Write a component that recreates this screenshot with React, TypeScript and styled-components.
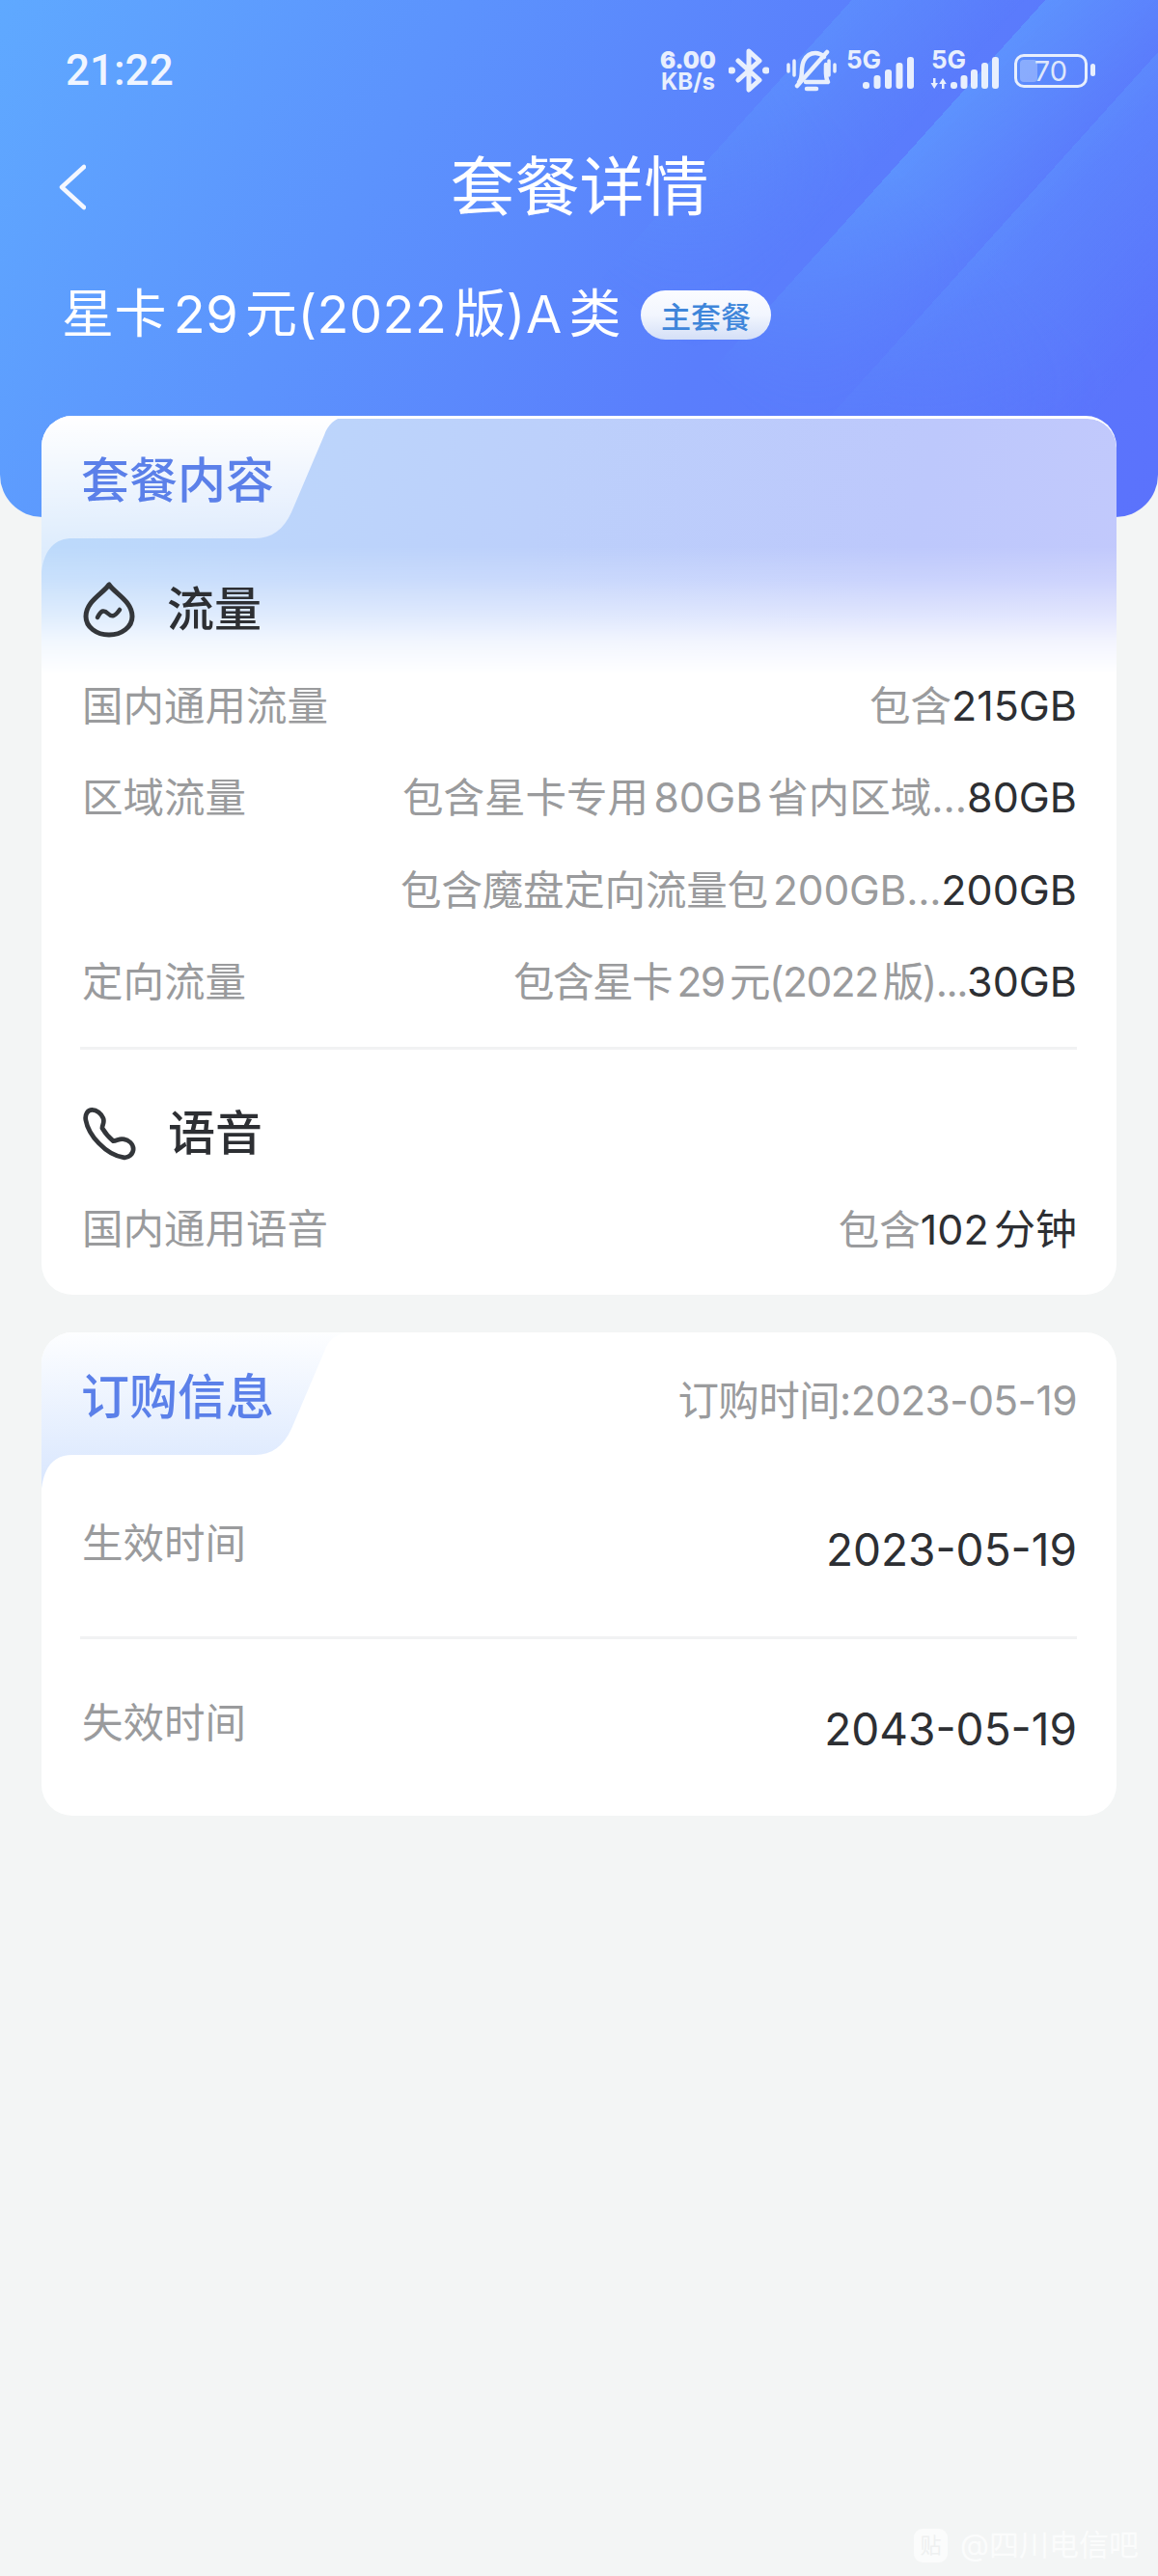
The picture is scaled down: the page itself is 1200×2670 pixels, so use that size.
import { createGlobalStyle, styled } from "styled-components";

const GlobalStyle = createGlobalStyle`
  html, body {
    margin: 0;
    padding: 0;
    background: #f3f5f5;
  }

  body {
    font-family: Inter, "Noto Sans CJK SC", sans-serif;
  }

  * {
    box-sizing: border-box;
  }
`;

const Page = styled.div`
  position: relative;
  width: 1200px;
  height: 2670px;
  overflow: hidden;
  background: #f3f5f5;
`;

const Header = styled.header`
  position: relative;
  height: 536px;
  padding-top: 50px;
  border-radius: 0 0 44px 44px;
  overflow: hidden;
  color: #fff;
  background: linear-gradient(118deg, #5fa9ff 0%, #5c93fd 32%, #5a7efc 62%, #5b72fc 100%);

  &::before {
    content: "";
    position: absolute;
    inset: 0;
    background:
      linear-gradient(132deg, transparent 928px, rgba(96, 160, 255, 0.34) 928px, transparent 1130px),
      linear-gradient(132deg, transparent 805px, rgba(96, 165, 255, 0.55) 805px, transparent 960px),
      linear-gradient(132deg, transparent 656px, rgba(96, 160, 255, 0.38) 656px, transparent 790px);
    mask-image: linear-gradient(42deg, transparent 50%, #000 74%);
  }
`;

const StatusBar = styled.div`
  position: relative;
  display: flex;
  align-items: center;
  justify-content: space-between;
  height: 46px;
  padding: 0 67px 0 68px;
`;

const Clock = styled.span`
  font-family: Roboto, sans-serif;
  font-size: 44px;
  font-weight: 500;
  line-height: 46px;
  color: #f0f5ff;
`;

const StatusIcons = styled.div`
  display: flex;
  align-items: center;
  height: 46px;
  color: #e8effd;
`;

const Speed = styled.div`
  display: flex;
  flex-direction: column;
  width: 60px;
  margin-right: 12px;
  font-weight: 700;
  text-align: center;

  b {
    font-size: 24px;
    line-height: 23px;
  }

  span {
    font-size: 24px;
    line-height: 22px;
  }
`;

const Glyph = styled.svg<{ $gap: number }>`
  display: block;
  flex: none;
  margin-right: ${(p) => p.$gap}px;
`;

const Signal = styled.div<{ $gap: number }>`
  position: relative;
  width: 71px;
  height: 46px;
  margin-right: ${(p) => p.$gap}px;

  svg {
    position: absolute;
    right: 0;
    bottom: 4px;
  }

  span {
    position: absolute;
    left: 1px;
    top: 0;
    font-size: 26px;
    font-weight: 700;
    line-height: 24px;
  }
`;

const Battery = styled.div`
  position: relative;
  display: flex;
  align-items: center;
  justify-content: center;
  width: 76px;
  height: 35px;
  margin-right: 6px;
  border: 3.5px solid #e8effd;
  border-radius: 10px;
  font-size: 29px;
  font-weight: 400;
  color: #dfe7fb;

  &::after {
    content: "";
    position: absolute;
    right: -11px;
    top: 7px;
    width: 5px;
    height: 13px;
    border-radius: 3px;
    background: #e8effd;
  }
`;

const BatteryFill = styled.div`
  position: absolute;
  left: 3px;
  top: 3px;
  bottom: 3px;
  width: 18px;
  border-radius: 4px;
  background: rgba(255, 255, 255, 0.28);
`;

const BatteryLevel = styled.span`
  position: relative;
`;

const NavBar = styled.div`
  position: relative;
  display: grid;
  grid-template-columns: 1fr auto 1fr;
  align-items: center;
  height: 80px;
  margin-top: 58px;
  padding-left: 61px;
`;

const NavTitle = styled.h1`
  margin: 0;
  font-size: 67px;
  font-weight: 400;
  line-height: 80px;
  transform: translateX(-30px);
`;

const PlanRow = styled.div`
  position: relative;
  display: flex;
  align-items: center;
  gap: 20px;
  height: 60px;
  margin-top: 62px;
  padding-left: 64px;
`;

const PlanName = styled.span`
  font-size: 54px;
  font-weight: 400;
  line-height: 60px;
  letter-spacing: 0.5px;
  text-autospace: normal;
`;

const PlanTag = styled.span`
  display: flex;
  align-items: center;
  justify-content: center;
  width: 135px;
  height: 51px;
  border-radius: 26px;
  font-size: 31px;
  font-weight: 500;
  color: #3f86da;
  background: linear-gradient(180deg, #fbfcff 0%, #f2f6fe 50%, #d4dff7 100%);
`;

const Main = styled.main`
  position: relative;
  display: flex;
  flex-direction: column;
  gap: 39px;
  margin-top: -105px;
  padding: 0 43px;
`;

const Card = styled.section`
  position: relative;
  border-radius: 32px;
  overflow: hidden;
  background: #fff;
`;

const CardGlow = styled.div`
  position: absolute;
  left: 0;
  right: 0;
  top: 3px;
  height: 265px;
  border-radius: 30px 30px 0 0;
  background: linear-gradient(100deg, #bcdafb 0%, #bcd0fb 45%, #bdc8fc 80%, #c2c9fc 100%);
  mask-image: linear-gradient(
    180deg,
    #000 0%,
    #000 50%,
    rgba(0, 0, 0, 0.8) 63%,
    rgba(0, 0, 0, 0.45) 78%,
    rgba(0, 0, 0, 0.2) 87%,
    transparent 100%
  );
`;

const TabShape = styled.svg`
  position: absolute;
  left: 0;
  top: 0;
  display: block;
`;

const CardHead = styled.div`
  position: relative;
  display: flex;
  justify-content: space-between;
  height: 132px;
  padding: 0 41px 0 41px;
`;

const CardTitle = styled.h2`
  margin: 0;
  font-size: 50px;
  font-weight: 500;
  line-height: 134px;
  color: #5b80e9;
`;

const OrderTime = styled.span`
  padding-top: 5px;
  font-size: 42.5px;
  line-height: 132px;
  letter-spacing: -0.6px;
  color: #9a9b9d;
`;

const SectionHead = styled.div<{ $top: number }>`
  position: relative;
  display: flex;
  align-items: center;
  gap: 33px;
  height: 70px;
  margin-top: ${(p) => p.$top}px;
  padding-left: 43px;
  font-size: 49px;
  font-weight: 500;
  color: #2d2f33;
`;

const SectionName = styled.span`
  padding-bottom: 9px;
`;

const RowList = styled.div<{ $top: number }>`
  position: relative;
  margin-top: ${(p) => p.$top}px;
  padding: 0 41px 0 42px;
`;

const Row = styled.div`
  display: flex;
  align-items: center;
  justify-content: space-between;
  height: 95.3px;
  font-size: 42.5px;
`;

const Muted = styled.span<{ $squeeze?: number }>`
  color: #9a9b9d;
  white-space: nowrap;
  letter-spacing: ${(p) => p.$squeeze ?? 0}px;
`;

const Detail = styled.span`
  white-space: nowrap;
  text-autospace: normal;
`;

const Amount = styled.span`
  display: inline-block;
  font-size: 43px;
  color: #2d2f33;
`;

const Divider = styled.div<{ $top: number }>`
  height: 3px;
  margin: ${(p) => p.$top}px 41px 0 40px;
  background: #f1f2f3;
`;

const CardFoot = styled.div`
  height: 24px;
`;

const DateRow = styled.div`
  display: flex;
  align-items: flex-start;
  justify-content: space-between;
  height: 183px;
  padding: 61px 41px 0 42px;
`;

const DateLabel = styled.span`
  font-size: 42.5px;
  line-height: 52px;
  color: #9a9b9d;
`;

const DateValue = styled.span`
  font-size: 46px;
  line-height: 64px;
  color: #2d2f33;
`;

const Watermark = styled.div`
  position: absolute;
  right: 20px;
  top: 2618px;
  display: flex;
  align-items: center;
  gap: 13px;
  font-size: 31px;
  line-height: 40px;
  color: #fbfcfc;
`;

const WatermarkBadge = styled.span`
  display: flex;
  align-items: center;
  justify-content: center;
  width: 35px;
  height: 35px;
  border-radius: 9px;
  font-size: 22px;
  color: #eef0f0;
  background: #fbfcfc;
`;

function CardTab({ id, from, to }: { id: string; from: string; to: string }) {
  return (
    <TabShape width="330" height="165" viewBox="0 0 330 165">
      <defs>
        <linearGradient id={id} x1="0" y1="0" x2="0" y2="1">
          <stop offset="0" stopColor={from} />
          <stop offset="1" stopColor={to} />
        </linearGradient>
      </defs>
      <path
        d="M0 0H316C303 3 297 9 293 20L259 100C251 118 238 127 222 127H32C15 127 3 137 0 162Z"
        fill={`url(#${id})`}
      />
    </TabShape>
  );
}

function SignalBars() {
  const bars = [
    { x: 0, h: 7 },
    { x: 11.5, h: 14 },
    { x: 23, h: 20 },
    { x: 34.5, h: 27 },
    { x: 46, h: 33 },
  ];

  return (
    <svg width="53" height="33" viewBox="0 0 53 33" fill="currentColor">
      {bars.map((bar) => (
        <rect key={bar.x} x={bar.x} y={33 - bar.h} width="7" height={bar.h} rx="3" />
      ))}
    </svg>
  );
}

function DropIcon() {
  return (
    <svg width="54" height="58" viewBox="0 0 54 58" fill="none" stroke="#33363a" strokeLinecap="round">
      <path
        d="M27 3C21 12 3 20 3 36C3 47 14 55 27 55C40 55 51 47 51 36C51 20 33 12 27 3Z"
        strokeWidth="5"
        strokeLinejoin="round"
      />
      <path d="M15 37C19 29 22 29 26 33C30 37 33 36 38 29" strokeWidth="4.5" />
    </svg>
  );
}

function PhoneIcon() {
  return (
    <svg width="55" height="58" viewBox="0 0 58 58" fill="none" stroke="#33363a" strokeWidth="5" strokeLinejoin="round">
      <path d="M10 3C5 3 2 8 3 14C6 31 25 52 44 55C50 56 55 51 55 46C55 40 50 36 44 35C40 34 37 37 33 37C28 33 24 28 21 23C21 19 24 17 22 12C20 7 15 3 10 3Z" />
    </svg>
  );
}

function App() {
  return (
    <Page>
      <GlobalStyle />
      <Header>
        <StatusBar>
          <Clock>21:22</Clock>
          <StatusIcons>
            <Speed>
              <b>6.00</b>
              <span>KB/s</span>
            </Speed>
            <Glyph $gap={18} width="42" height="46" viewBox="0 0 42 46" fill="none" stroke="currentColor" strokeWidth="5" strokeLinejoin="round" strokeLinecap="round">
              <path d="M10 13L32 33L21 43V3L32 13L10 33" />
              <path d="M3 23H3.5M38.5 23H39" strokeWidth="7" />
            </Glyph>
            <Glyph $gap={9} width="52" height="44" viewBox="0 0 52 44" fill="none" stroke="currentColor" strokeWidth="4.5" strokeLinecap="round" strokeLinejoin="round">
              <path d="M2 16V23M8 12V27M44 12V27M50 16V23" strokeWidth="3.5" />
              <path d="M13 34C18 29 14 20 18 12C21 6 26 4 30 4C34 4 37 6 39 8M41 16C41 24 40 29 43 34H20" />
              <path d="M11 38L42 3" />
              <path d="M21 41H31" />
            </Glyph>
            <Signal $gap={17}>
              <span>5G</span>
              <SignalBars />
            </Signal>
            <Signal $gap={16}>
              <span>5G</span>
              <svg width="71" height="33" viewBox="0 0 71 33" fill="currentColor">
                <path d="M3 22H5.500V27H8L4.200 33L0.500 27H3Z" />
                <path d="M13 22L16.800 28H14.500V33H12V28H9.200Z" />
                <rect x="21" y="26" width="7" height="7" rx="3" />
                <rect x="31.500" y="19" width="7" height="14" rx="3" />
                <rect x="42" y="13" width="7" height="20" rx="3" />
                <rect x="53" y="6" width="7" height="27" rx="3" />
                <rect x="64" y="0" width="7" height="33" rx="3" />
              </svg>
            </Signal>
            <Battery>
              <BatteryFill />
              <BatteryLevel>70</BatteryLevel>
            </Battery>
          </StatusIcons>
        </StatusBar>
        <NavBar>
          <svg width="28" height="48" viewBox="0 0 28 48" fill="none" stroke="#f4f7ff" strokeWidth="4.500" strokeLinecap="round" strokeLinejoin="round">
            <path d="M26 3L3 24L26 45" />
          </svg>
          <NavTitle>套餐详情</NavTitle>
        </NavBar>
        <PlanRow>
          <PlanName>星卡29元(2022版)A类</PlanName>
          <PlanTag>主套餐</PlanTag>
        </PlanRow>
      </Header>

      <Main>
        <Card>
          <CardGlow />
          <CardTab id="tab-content" from="#ffffff" to="rgba(255,255,255,0.42)" />
          <CardHead>
            <CardTitle>套餐内容</CardTitle>
          </CardHead>
          <SectionHead $top={34}>
            <DropIcon />
            <SectionName>流量</SectionName>
          </SectionHead>
          <RowList $top={14}>
            <Row>
              <Muted>国内通用流量</Muted>
              <Detail>
                <Muted>包含</Muted>
                <Amount>215GB</Amount>
              </Detail>
            </Row>
            <Row>
              <Muted>区域流量</Muted>
              <Detail>
                <Muted>包含星卡专用80GB省内区域...</Muted>
                <Amount>80GB</Amount>
              </Detail>
            </Row>
            <Row>
              <span />
              <Detail>
                <Muted $squeeze={-0.2}>包含魔盘定向流量包200GB...</Muted>
                <Amount>200GB</Amount>
              </Detail>
            </Row>
            <Row>
              <Muted>定向流量</Muted>
              <Detail>
                <Muted $squeeze={-1.5}>包含星卡29元(2022版)...</Muted>
                <Amount>30GB</Amount>
              </Detail>
            </Row>
          </RowList>
          <Divider $top={23} />
          <SectionHead $top={52}>
            <PhoneIcon />
            <SectionName>语音</SectionName>
          </SectionHead>
          <RowList $top={13}>
            <Row>
              <Muted>国内通用语音</Muted>
              <Detail>
                <Muted>包含</Muted>
                <Amount>102分钟</Amount>
              </Detail>
            </Row>
          </RowList>
          <CardFoot />
        </Card>

        <Card>
          <CardTab id="tab-order" from="#fdfeff" to="#d8e6fe" />
          <CardHead>
            <CardTitle>订购信息</CardTitle>
            <OrderTime>订购时间:2023-05-19</OrderTime>
          </CardHead>
          <DateRow>
            <DateLabel>生效时间</DateLabel>
            <DateValue>2023-05-19</DateValue>
          </DateRow>
          <Divider $top={0} />
          <DateRow>
            <DateLabel>失效时间</DateLabel>
            <DateValue>2043-05-19</DateValue>
          </DateRow>
        </Card>
      </Main>

      <Watermark>
        <WatermarkBadge>贴</WatermarkBadge>
        @四川电信吧
      </Watermark>
    </Page>
  );
}

export default App;
